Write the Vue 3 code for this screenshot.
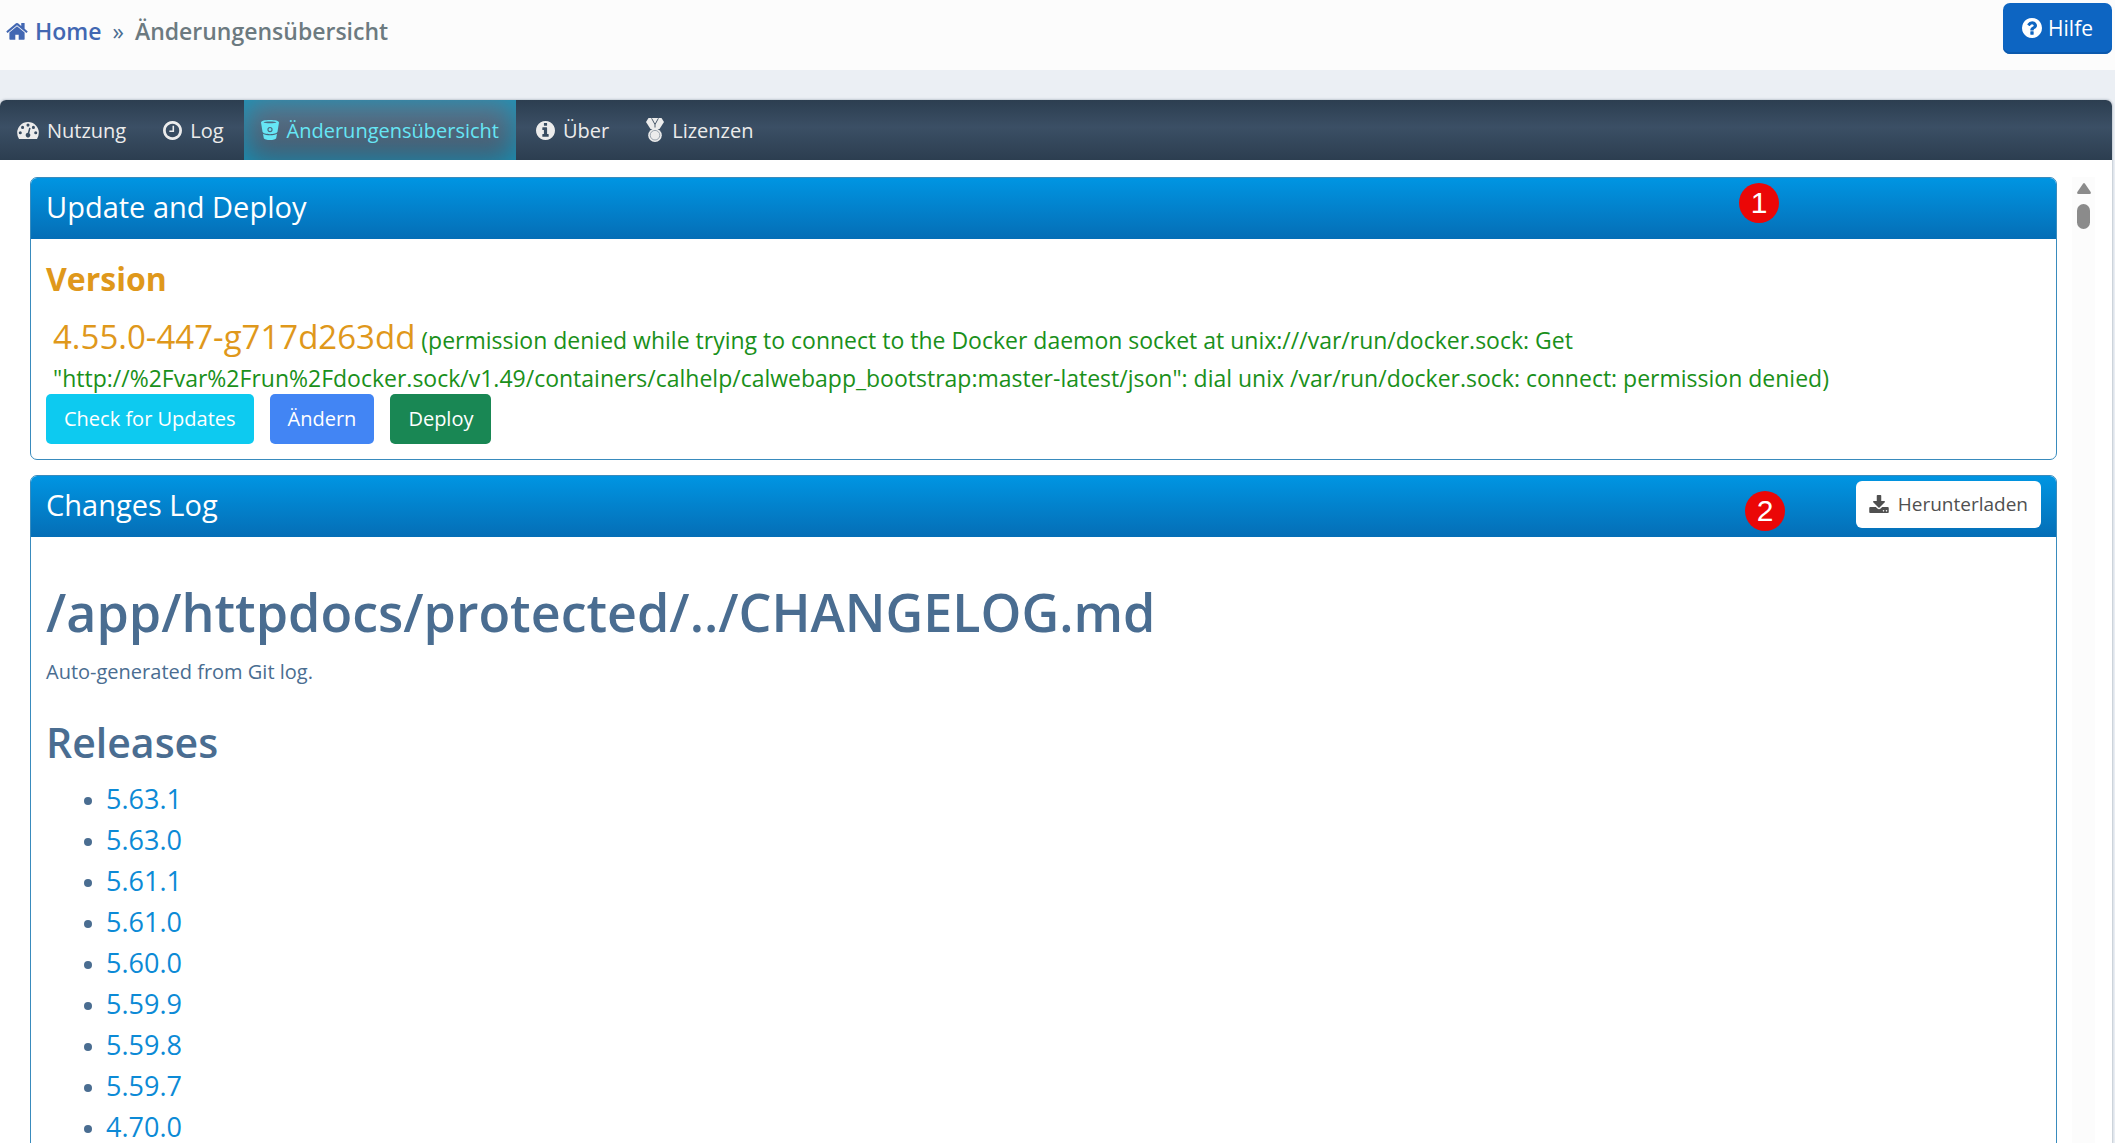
<script setup>
const circle =
  'M1664 896q0 209-103 385.5t-279.5 279.5-385.5 103-385.5-103-279.5-279.5-103-385.5 103-385.5 279.5-279.5 385.5-103 385.5 103 279.5 279.5 103 385.5z'
const tabs = [
  { label: 'Nutzung', icon: 'gauge' },
  { label: 'Log', icon: 'clock' },
  { label: 'Änderungensübersicht', icon: 'bucket', active: true },
  { label: 'Über', icon: 'info' },
  { label: 'Lizenzen', icon: 'medal' }
]
const releases = ['5.63.1', '5.63.0', '5.61.1', '5.61.0', '5.60.0', '5.59.9', '5.59.8', '5.59.7', '4.70.0']
</script>

<template>
  <div class="page">
    <header class="topbar">
      <nav class="crumbs" aria-label="Breadcrumb">
        <a class="home" href="#">
          <svg class="home-icon" viewBox="64 190 1664 1350" aria-hidden="true"><path d="M1472 992v480q0 26-19 45t-45 19h-384v-384h-256v384h-384q-26 0-45-19t-19-45v-480q0-1 .5-3t.5-3l575-474 575 474q1 2 1 6zm223-69l-62 74q-8 9-21 11h-3q-13 0-21-7l-692-577-692 577q-12 8-24 7-13-2-21-11l-62-74q-8-10-7-23.5t11-21.5l719-599q32-26 76-26t76 26l244 204v-195q0-14 9-23t23-9h192q14 0 23 9t9 23v408l219 182q10 8 11 21.5t-7 23.5z" /></svg>
          <span>Home</span>
        </a>
        <span class="sep">»</span>
        <span class="here">Änderungensübersicht</span>
      </nav>
      <button class="help" type="button">
        <svg class="help-icon" viewBox="128 128 1536 1536" aria-hidden="true"><path :d="'M1024 1376v-192q0-14-9-23t-23-9h-192q-14 0-23 9t-9 23v192q0 14 9 23t23 9h192q14 0 23-9t9-23zm256-672q0-88-55.5-163t-138.5-116-170-41q-243 0-371 213-15 24 8 42l132 100q7 6 19 6 16 0 25-12 53-68 86-92 34-24 86-24 48 0 85.5 26t37.5 59q0 38-20 61t-68 45q-63 28-115.5 86.5t-52.5 125.5v36q0 14 9 23t23 9h192q14 0 23-9t9-23q0-19 21.5-49.5t54.5-49.5q32-18 49-28.5t46-35 44.5-48 28-60.5 12.5-81z' + circle" /></svg>
        <span>Hilfe</span>
      </button>
    </header>

    <main class="box">
      <nav class="tabs" aria-label="System">
        <a v-for="t in tabs" :key="t.label" href="#" class="tab" :class="{ active: t.active }">
          <svg v-if="t.icon === 'gauge'" class="i-gauge" viewBox="0 256 1792 1408" aria-hidden="true"><path d="M1792 1152q0 261-141 483-19 29-54 29h-1402q-35 0-54-29-141-221-141-483 0-182 71-348t191-286 286-191 348-71 348 71 286 191 191 286 71 348zM128 1152a128 128 0 1 0 256 0a128 128 0 1 0-256 0zM320 704a128 128 0 1 0 256 0a128 128 0 1 0-256 0zM768 512a128 128 0 1 0 256 0a128 128 0 1 0-256 0zM1216 704a128 128 0 1 0 256 0a128 128 0 1 0-256 0zM1408 1152a128 128 0 1 0 256 0a128 128 0 1 0-256 0zM1004 1185l101-382q6-26-7.5-48.5t-38.5-29.5-48 6.5-30 39.5l-101 382q-60 5-107 43.5t-63 98.5q-20 77 20 146t117 89 146-20 89-117q16-60-6-117t-72-91z" /></svg>
          <svg v-else-if="t.icon === 'clock'" class="i-round" viewBox="128 128 1536 1536" aria-hidden="true"><path :d="'M1024 544v448q0 14-9 23t-23 9h-320q-14 0-23-9t-9-23v-64q0-14 9-23t23-9h224v-352q0-14 9-23t23-9h64q14 0 23 9t9 23zM1440 896q0-148-73-273t-198-198-273-73-273 73-198 198-73 273 73 273 198 198 273 73 273-73 198-198 73-273z' + circle" /></svg>
          <svg v-else-if="t.icon === 'bucket'" class="i-bucket" viewBox="0 0 18 20" aria-hidden="true"><path d="M0 2.600C0 .8 4 0 9 0s9 .8 9 2.600l-1.500 9.200C16 13.200 12.800 14.200 9 14.200s-7-1-7.500-2.400zM2.500 2.300C3 3 6 3.300 9 3.300s6-.3 6.500-1C15 1.700 12 1.400 9 1.400S3 1.700 2.500 2.300zM6.400 9.600a2.600 2.600 0 1 0 5.200 0a2.600 2.600 0 1 0-5.200 0zM7.500 9.600a1.500 1.500 0 1 1 3 0a1.500 1.500 0 1 1-3 0zM2 13.700C4 14.900 6.400 15.300 9 15.300s5-.4 7-1.600l-.8 4.500C14.700 19.300 12 20 9 20s-5.700-.7-6.200-1.800z" /></svg>
          <svg v-else-if="t.icon === 'info'" class="i-round" viewBox="128 128 1536 1536" aria-hidden="true"><path :d="'M1152 1376v-160q0-14-9-23t-23-9h-96v-512q0-14-9-23t-23-9h-320q-14 0-23 9t-9 23v160q0 14 9 23t23 9h96v320h-96q-14 0-23 9t-9 23v160q0 14 9 23t23 9h448q14 0 23-9t9-23zm-128-896v-160q0-14-9-23t-23-9h-192q-14 0-23 9t-9 23v160q0 14 9 23t23 9h192q14 0 23-9t9-23z' + circle" /></svg>
          <svg v-else class="i-medal" viewBox="0 0 18 24" aria-hidden="true">
            <path d="M2.500 0h13L18 4l-4.500 7h-9L0 4z" />
            <circle cx="9" cy="17.200" r="6.800" />
            <path class="line" d="M5.600 .3L9 6.500 12.400 .3M9 6.500V9.500" />
            <circle class="line thin" cx="9" cy="17.200" r="4.800" />
          </svg>
          <span>{{ t.label }}</span>
        </a>
      </nav>

      <div class="body">
        <div class="content">
          <section class="panel">
            <div class="head">
              <h2 class="title">Update and Deploy</h2>
              <span class="marker first">1</span>
            </div>
            <div class="inner">
              <h3 class="version">Version</h3>
              <p class="status"><span class="number">4.55.0-447-g717d263dd</span> (permission denied while trying to connect to the Docker daemon socket at unix:///var/run/docker.sock: Get<br>"http://%2Fvar%2Frun%2Fdocker.sock/v1.49/containers/calhelp/calwebapp_bootstrap:master-latest/json": dial unix /var/run/docker.sock: connect: permission denied)</p>
              <div class="actions">
                <button type="button" class="btn cyan">Check for Updates</button>
                <button type="button" class="btn blue">Ändern</button>
                <button type="button" class="btn green">Deploy</button>
              </div>
            </div>
          </section>

          <section class="panel">
            <div class="head">
              <h2 class="title">Changes Log</h2>
              <span class="marker second">2</span>
              <button type="button" class="download">
                <svg class="i-download" viewBox="64 0 1664 1536" aria-hidden="true"><path d="M1344 1344q0-26-19-45t-45-19-45 19-19 45 19 45 45 19 45-19 19-45zm256 0q0-26-19-45t-45-19-45 19-19 45 19 45 45 19 45-19 19-45zm128-224v320q0 40-28 68t-68 28h-1472q-40 0-68-28t-28-68v-320q0-40 28-68t68-28h465l135 136q58 56 136 56t136-56l136-136h464q40 0 68 28t28 68zm-325-569q17 41-14 70l-448 448q-18 19-45 19t-45-19l-448-448q-31-29-14-70 17-39 59-39h256v-448q0-26 19-45t45-19h256q26 0 45 19t19 45v448h256q42 0 59 39z" /></svg>
                <span>Herunterladen</span>
              </button>
            </div>
            <div class="inner log">
              <h1 class="path">/app/httpdocs/protected/../CHANGELOG.md</h1>
              <p class="note">Auto-generated from Git log.</p>
              <h2 class="releases">Releases</h2>
              <ul class="list">
                <li v-for="r in releases" :key="r"><a href="#">{{ r }}</a></li>
              </ul>
            </div>
          </section>
        </div>
        <div class="track" aria-hidden="true">
          <svg class="arrow" viewBox="0 0 14 11"><path d="M6 .8Q7-.6 8 .8L13.700 9q.6 2-1 2H1.300q-1.600 0-1-2z" /></svg>
          <div class="thumb"></div>
        </div>
      </div>
    </main>
  </div>
</template>

<style>
body {
  margin: 0;
  background: #ebeff4;
}
</style>

<style scoped>
* {
  box-sizing: border-box;
}
h1, h2, h3, p, ul {
  margin: 0;
}
a {
  text-decoration: none;
}
svg {
  display: block;
  flex: none;
  fill: currentColor;
  fill-rule: evenodd;
}
button {
  border: 0;
  font-family: inherit;
  cursor: pointer;
}
.page {
  display: flex;
  flex-direction: column;
  height: 100vh;
  overflow: hidden;
  background: #ebeff4;
  color: #4a6d91;
  font-family: "Open Sans", "Noto Sans", sans-serif;
}
.topbar {
  display: flex;
  flex: none;
  justify-content: space-between;
  align-items: flex-start;
  height: 70px;
  padding: 3px 3px 0 6px;
  background: #fcfcfc;
}
.crumbs {
  display: flex;
  align-items: center;
  height: 56px;
  font-size: 23px;
  font-weight: 600;
}
.home {
  display: flex;
  align-items: center;
  gap: 7px;
  color: #4267b2;
}
.home-icon {
  width: 22px;
  height: 18px;
}
.sep {
  margin: 0 11px;
  font-weight: 400;
}
.here {
  color: #6c7a80;
}
.help {
  display: flex;
  align-items: center;
  gap: 6px;
  height: 51px;
  padding: 0 19px 1px;
  border-radius: 7px;
  background: #0d65c2;
  box-shadow: inset 0 -2px 0 #0b59ad;
  color: #fff;
  font-size: 21px;
}
.help-icon {
  width: 20px;
  height: 20px;
}
.box {
  display: flex;
  flex: 1;
  flex-direction: column;
  min-height: 0;
  margin: 30px 3px 0 0;
  border-radius: 6px 6px 0 0;
  background: #fff;
  box-shadow: 0 0 2px 1px #c3cad3;
}
.tabs {
  display: flex;
  flex: none;
  gap: 3px;
  height: 60px;
  border-radius: 6px 6px 0 0;
  background: linear-gradient(#2c3e50, #3b4f65 45%, #2c3e50);
  overflow: hidden;
}
.tab {
  display: flex;
  align-items: center;
  gap: 8px;
  padding: 0 17px;
  color: #ececec;
  font-size: 20px;
}
.tab.active {
  color: #66e6f5;
  background: linear-gradient(#5f7389, #45566a);
  box-shadow: inset 0 0 30px #1297bd;
}
.i-gauge {
  width: 22px;
  height: 17px;
}
.i-round {
  width: 19px;
  height: 19px;
}
.i-bucket {
  width: 18px;
  height: 20px;
}
.i-medal {
  width: 18px;
  height: 24px;
}
.line {
  fill: none;
  stroke: #4b5a6b;
  stroke-width: 1;
}
.thin {
  stroke: #9aa4ae;
}
.body {
  display: flex;
  flex: 1;
  gap: 15px;
  min-height: 0;
  padding: 17px 17px 0 30px;
}
.content {
  flex: 1;
  min-width: 0;
  overflow: hidden;
}
.panel {
  margin-bottom: 15px;
  border: 1px solid #398bbd;
  border-radius: 7px;
}
.head {
  position: relative;
  display: flex;
  align-items: center;
  justify-content: space-between;
  height: 61px;
  padding: 0 15px 5px;
  border-radius: 6px 6px 0 0;
  background: linear-gradient(#0095e2, #056eb6);
}
.title {
  color: #fff;
  font-size: 29px;
  font-weight: 400;
}
.marker {
  position: absolute;
  width: 40px;
  height: 40px;
  border-radius: 50%;
  background: #eb0707;
  color: #fff;
  font: 30px/40px "Liberation Sans", Arial, sans-serif;
  text-align: center;
}
.first {
  top: 5px;
  right: 277px;
}
.second {
  top: 15px;
  right: 271px;
}
.download {
  display: flex;
  align-items: center;
  gap: 9px;
  height: 47px;
  padding: 0 13px;
  border-radius: 6px;
  background: #fff;
  color: #505050;
  font-size: 19px;
}
.i-download {
  width: 20px;
  height: 18px;
}
.inner {
  padding: 15px;
}
.version {
  color: #df981b;
  font-size: 32px;
  font-weight: 700;
  line-height: 50px;
}
.status {
  padding: 14px 7px 0;
  color: #1a901a;
  font-size: 23px;
  line-height: 38px;
}
.number {
  color: #df981b;
  font-size: 33px;
}
.actions {
  display: flex;
  gap: 16px;
  margin-top: -3px;
}
.btn {
  height: 50px;
  padding: 0 18px 2px;
  border-radius: 5px;
  color: #fff;
  font-size: 20px;
}
.cyan {
  background: #0dcaf0;
}
.blue {
  background: #4285f4;
}
.green {
  background: #198754;
}
.log {
  padding-top: 42px;
}
.path {
  font-size: 52px;
  font-weight: 600;
  line-height: 66px;
}
.note {
  margin-top: 11px;
  font-size: 20px;
  line-height: 32px;
}
.releases {
  margin-top: 26px;
  font-size: 41px;
  font-weight: 600;
  line-height: 56px;
}
.list {
  margin-top: 8px;
  padding-left: 38px;
  font-size: 27px;
  line-height: 41px;
  list-style: none;
}
.list li {
  display: flex;
  align-items: center;
  gap: 14px;
}
.list li::before {
  width: 8px;
  height: 8px;
  margin-top: 4px;
  border-radius: 50%;
  background: #4a6d91;
  content: "";
}
.list a {
  color: #0c8ad6;
}
.track {
  display: flex;
  flex-direction: column;
  align-items: center;
  gap: 10px;
  width: 23px;
  padding-top: 6px;
  background: #fcfcfc;
}
.arrow {
  width: 14px;
  height: 11px;
  color: #8b8b8b;
}
.thumb {
  width: 13px;
  height: 25px;
  border-radius: 7px;
  background: #8b8b8b;
}
</style>
